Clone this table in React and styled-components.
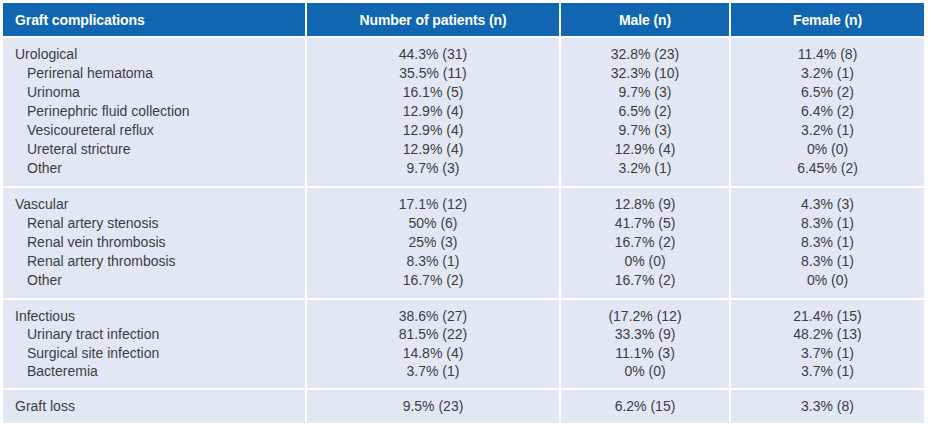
import React from "react";
import styled, { createGlobalStyle } from "styled-components";

const Global = createGlobalStyle`
  html, body { margin: 0; padding: 0; background: #ffffff; }
  body { font-family: "Liberation Sans", Arial, sans-serif; }
`;

const Page = styled.div`
  padding: 3px;
  width: 921px;
`;

const Table = styled.div`
  display: flex;
  flex-direction: column;
  gap: 2px;
  background: #ffffff;
`;

const Row = styled.div`
  display: grid;
  grid-template-columns: 302px 252px 168px 193px;
  column-gap: 2px;
`;

const HeadCell = styled.div`
  background: #1066b0;
  color: #ffffff;
  font-weight: bold;
  font-size: 14px;
  height: 33px;
  display: flex;
  align-items: center;
  justify-content: ${(p) => (p.$left ? "flex-start" : "center")};
  padding: 0 12px;
  box-sizing: border-box;
  letter-spacing: -0.1px;
`;

const Cell = styled.div`
  background: #e1e8f4;
  padding: ${(p) => (p.$single ? "7px 12px 7px" : "7px 12px 8px")};
  display: flex;
  flex-direction: column;
  align-items: ${(p) => (p.$left ? "flex-start" : "center")};
`;

const Line = styled.div`
  font-size: 14px;
  line-height: ${(p) => p.$lh || 19}px;
  color: #3b3d42;
  white-space: nowrap;
  padding-left: ${(p) => (p.$indent ? "12px" : "0")};
`;

const groups = [
  {
    rows: [
      ["Urological", "44.3% (31)", "32.8% (23)", "11.4% (8)"],
      ["Perirenal hematoma", "35.5% (11)", "32.3% (10)", "3.2% (1)"],
      ["Urinoma", "16.1% (5)", "9.7% (3)", "6.5% (2)"],
      ["Perinephric fluid collection", "12.9% (4)", "6.5% (2)", "6.4% (2)"],
      ["Vesicoureteral reflux", "12.9% (4)", "9.7% (3)", "3.2% (1)"],
      ["Ureteral stricture", "12.9% (4)", "12.9% (4)", "0% (0)"],
      ["Other", "9.7% (3)", "3.2% (1)", "6.45% (2)"],
    ],
  },
  {
    rows: [
      ["Vascular", "17.1% (12)", "12.8% (9)", "4.3% (3)"],
      ["Renal artery stenosis", "50% (6)", "41.7% (5)", "8.3% (1)"],
      ["Renal vein thrombosis", "25% (3)", "16.7% (2)", "8.3% (1)"],
      ["Renal artery thrombosis", "8.3% (1)", "0% (0)", "8.3% (1)"],
      ["Other", "16.7% (2)", "16.7% (2)", "0% (0)"],
    ],
  },
  {
    lh: 18.3,
    rows: [
      ["Infectious", "38.6% (27)", "(17.2% (12)", "21.4% (15)"],
      ["Urinary tract infection", "81.5% (22)", "33.3% (9)", "48.2% (13)"],
      ["Surgical site infection", "14.8% (4)", "11.1% (3)", "3.7% (1)"],
      ["Bacteremia", "3.7% (1)", "0% (0)", "3.7% (1)"],
    ],
  },
  {
    single: true,
    rows: [["Graft loss", "9.5% (23)", "6.2% (15)", "3.3% (8)"]],
  },
];

export default function App() {
  return (
    <>
      <Global />
      <Page>
        <Table>
          <Row>
            <HeadCell $left>Graft complications</HeadCell>
            <HeadCell>Number of patients (n)</HeadCell>
            <HeadCell>Male (n)</HeadCell>
            <HeadCell>Female (n)</HeadCell>
          </Row>
          {groups.map((g, gi) => (
            <Row key={gi}>
              {[0, 1, 2, 3].map((ci) => (
                <Cell key={ci} $left={ci === 0} $single={g.single}>
                  {g.rows.map((r, ri) => (
                    <Line key={ri} $lh={g.lh} $indent={ci === 0 && ri > 0}>
                      {r[ci]}
                    </Line>
                  ))}
                </Cell>
              ))}
            </Row>
          ))}
        </Table>
      </Page>
    </>
  );
}
